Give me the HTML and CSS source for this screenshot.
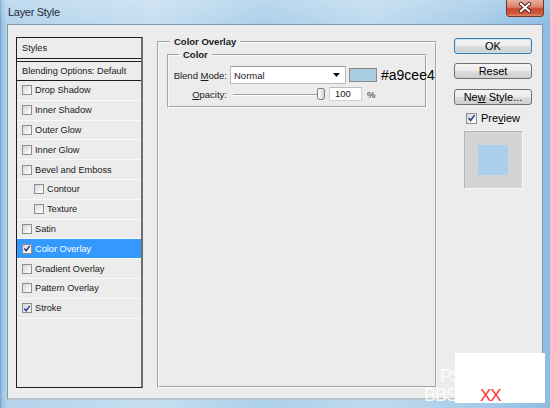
FILE: index.html
```html
<!DOCTYPE html>
<html>
<head>
<meta charset="utf-8">
<link rel="stylesheet" href="styles.css">
</head>
<body>
<div class="window">
  <div class="titlebar">
    <span class="title">Layer Style</span>
    <div class="close">
      <svg width="38" height="17" viewBox="0 0 38 17">
        <path d="M14.5 4.5 L23.5 12.5 M23.5 4.5 L14.5 12.5" stroke="#4a1a10" stroke-width="4" stroke-linecap="round"/>
        <path d="M14.5 4.5 L23.5 12.5 M23.5 4.5 L14.5 12.5" stroke="#ffffff" stroke-width="2.2" stroke-linecap="round"/>
      </svg>
    </div>
  </div>
  <div class="client">
    <div class="styles-list">
      <div class="list-header">Styles</div>
      <div class="list-blend">Blending Options: Default</div>
      <div class="item"><span class="cb"></span>Drop Shadow</div>
      <div class="item"><span class="cb"></span>Inner Shadow</div>
      <div class="item"><span class="cb"></span>Outer Glow</div>
      <div class="item"><span class="cb"></span>Inner Glow</div>
      <div class="item"><span class="cb"></span>Bevel and Emboss</div>
      <div class="item sub"><span class="cb"></span>Contour</div>
      <div class="item sub"><span class="cb"></span>Texture</div>
      <div class="item"><span class="cb"></span>Satin</div>
      <div class="item selected"><span class="cb"><svg width="9" height="9" viewBox="0 0 9 9"><path d="M1.5 4.5 L3.6 7 L7.6 1.5" fill="none" stroke="#24398c" stroke-width="1.6"/></svg></span>Color Overlay</div>
      <div class="item"><span class="cb"></span>Gradient Overlay</div>
      <div class="item"><span class="cb"></span>Pattern Overlay</div>
      <div class="item"><span class="cb"><svg width="9" height="9" viewBox="0 0 9 9"><path d="M1.5 4.5 L3.6 7 L7.6 1.5" fill="none" stroke="#24398c" stroke-width="1.6"/></svg></span>Stroke</div>
    </div>

    <fieldset class="group">
      <legend class="legend-main">Color Overlay</legend>
      <fieldset class="subgroup">
        <legend class="legend-sub">Color</legend>
        <div class="row blend-row">
          <span class="lbl">Blend <u>M</u>ode:</span>
          <div class="select">
            <span>Normal</span>
            <svg width="8" height="5" viewBox="0 0 8 5"><path d="M0 0 H7 L3.5 4 Z" fill="#111"/></svg>
          </div>
          <div class="swatch"></div>
          <span class="hex">#a9cee4</span>
        </div>
        <div class="row opacity-row">
          <span class="lbl"><u>O</u>pacity:</span>
          <div class="slider"><div class="thumb"></div></div>
          <div class="num">100</div>
          <span class="pct">%</span>
        </div>
      </fieldset>
    </fieldset>

    <div class="buttons">
      <div class="btn default">OK</div>
      <div class="btn">Reset</div>
      <div class="btn">Ne<u>w</u> Style...</div>
      <div class="preview-check">
        <span class="cb big"><svg width="10" height="10" viewBox="0 0 10 10"><path d="M1.8 5 L4 7.8 L8.4 1.8" fill="none" stroke="#24398c" stroke-width="1.7"/></svg></span>
        <span>Pre<u>v</u>iew</span>
      </div>
      <div class="preview-box"><div class="preview-inner"></div></div>
    </div>
  </div>

  <div class="wm-ps">PS</div>
  <div class="wm-bbs">BBS</div>
  <div class="wm-box"><span class="wm-xx">XX</span></div>
</div>
</body>
</html>
```

FILE: styles.css
```css
html, body {
  margin: 0;
  padding: 0;
}
body {
  width: 550px;
  height: 408px;
  overflow: hidden;
  font-family: "Liberation Sans", Arial, sans-serif;
  color: #1a1a1a;
}
.window {
  position: relative;
  width: 550px;
  height: 408px;
  display: flex;
  flex-direction: column;
  background:
    linear-gradient(180deg, rgba(255,255,255,0.18) 0, rgba(255,255,255,0) 24px),
    linear-gradient(90deg, #6f9fca 0, #9cc4e4 2px, #b4d3ec 7px, #c6def1 28%, #acd0ea 48%, #bfdaef 68%, #a6cbe8 88%, #8dbce2 100%);
}
.titlebar {
  height: 24px;
  flex: none;
  display: flex;
  justify-content: space-between;
  align-items: flex-start;
  padding: 0 6px 0 8px;
  box-sizing: border-box;
}
.title {
  font-size: 11px;
  letter-spacing: -0.3px;
  line-height: 25px;
  color: #1c2a38;
}
.close {
  width: 38px;
  height: 17px;
  box-sizing: border-box;
  border: 1px solid #7a3426;
  border-top: none;
  border-radius: 0 0 4px 4px;
  background: linear-gradient(180deg, #eab0a0 0, #d9826b 45%, #c4472e 55%, #cf5a3e 85%, #e08a6f 100%);
  display: flex;
  align-items: center;
  justify-content: center;
}
.close svg {
  display: block;
  margin-top: -1px;
}
.client {
  flex: none;
  margin: 0 7px;
  height: 376px;
  box-sizing: border-box;
  border: 1px solid #8398ad;
  border-bottom: 2px solid #b9c3cc;
  background: #ececec;
  display: flex;
  align-items: flex-start;
  padding: 12px 0 0 8px;
  font-size: 9.5px;
}

/* styles list */
.styles-list {
  flex: none;
  width: 127px;
  height: 351px;
  box-sizing: border-box;
  border: 1px solid #1e1e1e;
  border-right: 2px solid #6e6e6e;
  font-size: 9.2px;
}
.list-header {
  height: 20px;
  line-height: 20px;
  padding-left: 5px;
  border-bottom: 1px solid #1e1e1e;
}
.list-blend {
  margin-top: 2px;
  height: 18px;
  line-height: 18px;
  padding-left: 5px;
  border-top: 1px solid #1e1e1e;
  border-bottom: 1px solid #1e1e1e;
}
.item {
  height: 18.8px;
  border-bottom: 1px solid #fafafa;
  display: flex;
  align-items: center;
  gap: 3px;
  padding-left: 5px;
  white-space: nowrap;
}
.item.sub {
  padding-left: 17px;
}
.item.selected {
  background: #3399ff;
  color: #ffffff;
}
.cb {
  flex: none;
  width: 10px;
  height: 10px;
  box-sizing: border-box;
  border: 1px solid #8e8e8e;
  background: linear-gradient(135deg, #d6d6d6 0, #f4f4f4 70%, #ffffff 100%);
  display: flex;
  align-items: center;
  justify-content: center;
}
.cb svg {
  display: block;
}
.cb.big {
  width: 11px;
  height: 11px;
}

/* group boxes */
.group {
  flex: none;
  margin: -1px 0 0 14px;
  padding: 0 8px 0 8px;
  width: 280px;
  height: 352px;
  box-sizing: border-box;
  border: 2px groove #f8f8f8;
  min-width: 0;
}
.legend-main {
  font-weight: bold;
  font-size: 9.5px;
  line-height: 12px;
  padding: 0 4px;
  margin-left: 3px;
  color: #1a1a1a;
}
.subgroup {
  margin: 1px 0 0 0;
  padding: 0;
  height: 59px;
  box-sizing: border-box;
  border: 2px groove #f8f8f8;
  min-width: 0;
}
.legend-sub {
  font-weight: bold;
  font-size: 9.5px;
  line-height: 12px;
  padding: 0 4px;
  margin-left: 10px;
  color: #1a1a1a;
}
.row {
  display: flex;
  align-items: center;
}
.blend-row {
  margin-top: 5px;
  height: 18px;
}
.opacity-row {
  margin-top: 2px;
  height: 16px;
}
.lbl {
  flex: none;
  width: 58px;
  text-align: right;
  margin-right: 3px;
  white-space: nowrap;
}
.select {
  flex: none;
  width: 116px;
  height: 18px;
  box-sizing: border-box;
  border: 1px solid #b9b9b9;
  border-top-color: #9a9a9a;
  background: #ffffff;
  display: flex;
  align-items: center;
  justify-content: space-between;
  padding: 0 4px 0 3px;
}
.select svg {
  display: block;
  margin-top: 1px;
}
.swatch {
  flex: none;
  width: 28px;
  height: 14px;
  box-sizing: border-box;
  margin-left: 3px;
  border: 1px solid #8a8a8a;
  background: #a9cee4;
}
.hex {
  margin-left: 4px;
  font-size: 14px;
  color: #000;
  line-height: 16px;
}
.slider {
  flex: none;
  width: 96px;
  height: 13px;
  display: flex;
  justify-content: flex-end;
  align-items: center;
  background:
    linear-gradient(#a3a3a3, #a3a3a3) 3px 6px / 86px 1px no-repeat,
    linear-gradient(#ffffff, #ffffff) 3px 7px / 86px 1px no-repeat;
}
.thumb {
  width: 8px;
  height: 12px;
  box-sizing: border-box;
  border: 1px solid #7d7d7d;
  border-radius: 2px 2px 3px 3px;
  background: linear-gradient(90deg, #ffffff 0, #e6e6e6 60%, #cfcfcf 100%);
  margin-right: 1px;
}
.num {
  flex: none;
  margin-left: 3px;
  width: 33px;
  height: 14px;
  box-sizing: border-box;
  border: 1px solid #d2d2d2;
  border-top-color: #bcbcbc;
  background: #ffffff;
  padding-left: 5px;
  line-height: 12px;
}
.pct {
  margin-left: 5px;
}

/* buttons column */
.buttons {
  flex: none;
  margin-left: 17px;
  width: 78px;
  display: flex;
  flex-direction: column;
  align-items: center;
  font-size: 11px;
}
.btn {
  width: 78px;
  height: 16px;
  box-sizing: border-box;
  border: 1px solid #707070;
  border-radius: 3px;
  background: linear-gradient(180deg, #f4f4f4 0, #ececec 48%, #dcdcdc 52%, #cfcfcf 100%);
  text-align: center;
  line-height: 14px;
  color: #000;
  white-space: nowrap;
}
.btn + .btn {
  margin-top: 9px;
}
.btn.default {
  margin-top: 1px;
  border-color: #3d7bad;
  box-shadow: inset 0 0 0 1px #c4e5f6;
}
.btn:nth-child(3) {
  margin-top: 10px;
}
.preview-check {
  margin-top: 7px;
  height: 12px;
  display: flex;
  align-items: center;
  gap: 4px;
  color: #000;
}
.preview-box {
  margin-top: 7px;
  width: 59px;
  height: 58px;
  box-sizing: border-box;
  border: 1px solid #b4b4b4;
  border-right-color: #fafafa;
  border-bottom-color: #fafafa;
  background: #d4d4d4;
  display: flex;
  align-items: center;
  justify-content: center;
}
.preview-inner {
  width: 30px;
  height: 30px;
  background: #acd0ec;
}

/* watermark overlay */
.wm-ps, .wm-bbs {
  position: absolute;
  color: rgba(255,255,255,0.9);
  font-size: 18px;
  line-height: 18px;
  letter-spacing: -1px;
}
.wm-ps {
  left: 440px;
  top: 367px;
}
.wm-bbs {
  left: 424px;
  top: 386px;
}
.wm-box {
  position: absolute;
  left: 455px;
  top: 353px;
  width: 90px;
  height: 50px;
  background: #ffffff;
}
.wm-xx {
  position: absolute;
  left: 25px;
  top: 34px;
  font-size: 17px;
  line-height: 17px;
  color: #ff3333;
  letter-spacing: -1px;
}
```
